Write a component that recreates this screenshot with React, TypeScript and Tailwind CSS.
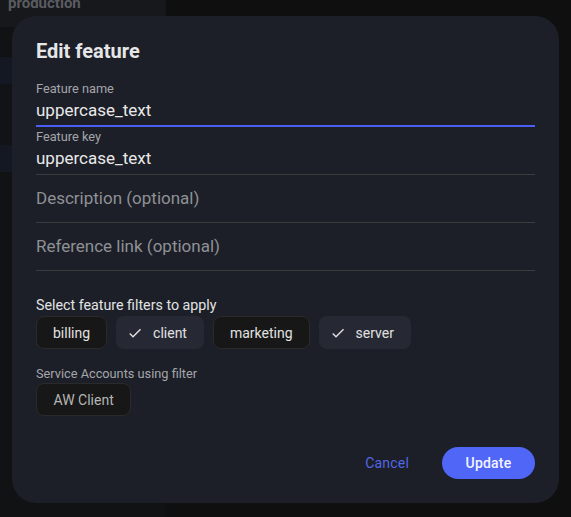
import type { ReactNode } from "react";

const filters = [
  { name: "billing", selected: false },
  { name: "client", selected: true },
  { name: "marketing", selected: false },
  { name: "server", selected: true },
];

function CheckIcon() {
  return (
    <svg viewBox="0 0 24 24" className="w-4 h-4 shrink-0" fill="currentColor">
      <path d="M9 16.17 4.83 12l-1.42 1.41L9 19 21 7l-1.41-1.41z" />
    </svg>
  );
}

function Chip({ children, selected }: { children: ReactNode; selected?: boolean }) {
  if (selected) {
    return (
      <span className="h-[33px] flex items-center gap-[10px] pl-[11px] pr-[17px] rounded-lg bg-[#262933] text-[#e2e2e2] text-sm">
        <CheckIcon />
        {children}
      </span>
    );
  }
  return (
    <span className="h-[33px] flex items-center px-4 rounded-lg bg-[#171717] border border-[#2a2a2a] text-[#e2e2e2] text-sm">
      {children}
    </span>
  );
}

function FilledField({ label, value, active }: { label: string; value: string; active?: boolean }) {
  return (
    <div
      className={
        active
          ? "h-12 pt-[2px] border-b-2 border-[#4a5ff2]"
          : "h-12 pt-[2px] border-b border-[#3a3b3f]"
      }
    >
      <div className="text-[12.75px] leading-4 text-[#a4a6ab]">{label}</div>
      <div className="mt-px text-[17px] leading-6 text-[#e9e9ea]">{value}</div>
    </div>
  );
}

function EmptyField({ placeholder }: { placeholder: string }) {
  return (
    <div className="h-12 pt-[11px] border-b border-[#3a3b3f]">
      <div className="text-[17px] leading-6 text-[#8f9196]">{placeholder}</div>
    </div>
  );
}

export default function App() {
  return (
    <div
      className="relative w-[571px] h-[517px] overflow-hidden bg-[#0f0f10]"
      style={{ fontFamily: "Roboto, 'Liberation Sans', sans-serif" }}
    >
      {/* dimmed page behind the dialog */}
      <div className="w-[166px] h-full bg-[#111214] flex flex-col">
        <div className="h-[27px] bg-[#17181c] px-[8px] overflow-hidden">
          <div className="-mt-[7px] text-[15px] leading-5 font-bold text-[#5a5c61]">production</div>
        </div>
        <div className="h-[30px]" />
        <div className="h-[27px] bg-[#141822]" />
        <div className="h-[61px] bg-[#121316]" />
        <div className="h-[27px] bg-[#141822]" />
      </div>

      {/* dialog */}
      <div className="absolute left-[12px] top-[16px] w-[547px] h-[487px] rounded-[24px] bg-[#1c1f27] px-6 pt-[21px] pb-6 flex flex-col">
        <h2 className="text-[20px] leading-7 font-bold text-[#e6e6e7]">Edit feature</h2>

        <div className="mt-[14px] flex flex-col">
          <FilledField label="Feature name" value="uppercase_text" active />
          <FilledField label="Feature key" value="uppercase_text" />
          <EmptyField placeholder="Description (optional)" />
          <EmptyField placeholder="Reference link (optional)" />
        </div>

        <div className="mt-6 text-[14.25px] leading-5 text-[#e2e3e5]">Select feature filters to apply</div>
        <div className="mt-px flex gap-[9px]">
          {filters.map((f) => (
            <Chip key={f.name} selected={f.selected}>
              {f.name}
            </Chip>
          ))}
        </div>

        <div className="mt-[17px] text-[12.75px] leading-4 text-[#a4a6ab]">Service Accounts using filter</div>
        <div className="mt-px flex">
          <span className="h-[33px] flex items-center px-[16.5px] rounded-lg bg-[#171717] border border-[#2a2a2a] text-[#b5b5b5] text-sm">
            AW Client
          </span>
        </div>

        <div className="mt-auto flex justify-end items-center gap-[17px]">
          <button type="button" className="px-4 h-8 text-sm tracking-[0.2px] text-[#5366e6]">
            Cancel
          </button>
          <button
            type="button"
            className="h-8 w-[93px] rounded-full bg-[#4f66f7] text-sm tracking-[0.2px] font-medium text-[#f4f5ff]"
          >
            Update
          </button>
        </div>
      </div>
    </div>
  );
}
